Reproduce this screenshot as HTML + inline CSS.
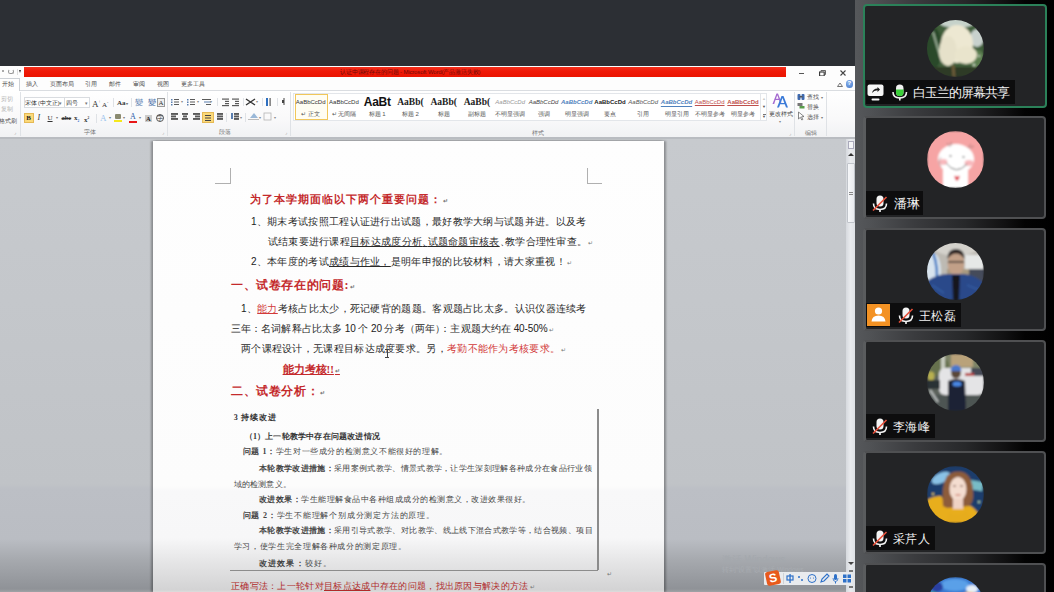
<!DOCTYPE html>
<html><head><meta charset="utf-8">
<style>
*{margin:0;padding:0;box-sizing:border-box}
html,body{width:1054px;height:592px;overflow:hidden;background:#2c2f34;font-family:"Liberation Sans",sans-serif}
.a{position:absolute}
#word{position:absolute;left:0;top:66px;width:855px;height:526px;background:#fdfdfd;overflow:hidden}
#red{position:absolute;left:24px;top:0.6px;width:762px;height:10.5px;background:linear-gradient(#f2301c,#f01a08 40%,#ea1400)}
#doc{position:absolute;left:0;top:73px;width:855px;height:453px;background:linear-gradient(#c7cace 0px,#c4c7cb 161px,#c0c3c7 345px,#bcbfc5 350px,#babdc3 400px,#a6a9ae 421px,#8f9297 450px,#a0a3a6 453px)}
#page{position:absolute;left:153px;top:2px;width:511px;height:451px;background:linear-gradient(#fefefe 0px,#fcfcfc 345px,#f8f8f9 350px,#f7f7f8 397px,#e6e6e7 420px,#d3d3d4 449px,#dcdcdc 451px);box-shadow:-2px 0 2px rgba(0,0,0,.3),2px 0 2px rgba(0,0,0,.3)}
#panel{position:absolute;left:855px;top:0;width:199px;height:592px;background:linear-gradient(90deg,#56585b 0px,#505255 15px,#3a3b3e 60px,#27282a 110px,#111112 150px,#030303 170px,#000 199px)}
.tile{position:absolute;left:8px;width:183px;height:102.5px;background:#232426;border:2px solid #4f5052;border-left:3px solid #5a5c5e;border-radius:4px}
.av{position:absolute;left:63px;width:57px;height:57px;border-radius:50%;overflow:hidden}
.nb{position:absolute;left:3px;height:24px;background:#0d0d0e;color:#f2f2f2;font-size:12.5px;line-height:24px;white-space:nowrap}

.t{position:absolute;white-space:nowrap;font-family:"Liberation Serif",serif;color:#2a2a2a}
.h{color:#c42a2c;font-weight:bold}
.r{color:#d23a3a}
.u{text-decoration:underline;text-underline-offset:1px}
.pm{font-size:6px;color:#777;margin-left:1px}

.rb{position:absolute;white-space:nowrap;font-family:"Liberation Sans",sans-serif;font-size:6px;line-height:8px;color:#4a4a4a}
.sep{position:absolute;width:1px;background:#dfe2e6}
.ic{position:absolute}
</style></head><body>
<div id="word">
  <div id="red"></div>
  <div id="doc">
    <div id="page"></div>
  </div>
</div>


<div id="rib">
<!-- title row -->
<div class="a" style="left:2px;top:70px;width:2px;height:2px;background:#aaa"></div>
<div class="a" style="left:8px;top:68.5px;width:5.5px;height:5.5px;border:1.3px solid #999;border-top-color:transparent;border-radius:50%"></div>
<div class="a" style="left:17px;top:69px;width:1px;height:6px;background:#ddd"></div>
<div class="a" style="left:19px;top:70px;width:0;height:0;border-left:1.8px solid transparent;border-right:1.8px solid transparent;border-top:3px solid #333"></div>
<div class="rb" style="left:340px;top:68px;font-size:6px;color:#6e0c08;letter-spacing:-0.15px">认证中课程存在的问题 - Microsoft Word(产品激活失败)</div>
<div class="a" style="left:798.5px;top:73px;width:5px;height:1px;background:#555"></div>
<svg class="ic" style="left:818.5px;top:69.5px" width="7" height="6.5" viewBox="0 0 7 6.5"><path d="M2 1.5V0.5H6.5V4.5H5.5" fill="none" stroke="#555" stroke-width="0.9"/><rect x="0.6" y="2" width="4.6" height="4" fill="none" stroke="#333" stroke-width="1.1"/></svg>
<svg class="ic" style="left:840px;top:70px" width="6" height="6"><path d="M0.5 0.5L5.5 5.5M5.5 0.5L0.5 5.5" stroke="#444" stroke-width="1.1"/></svg>
<!-- tabs -->
<div class="a" style="left:-1px;top:77.5px;width:20.5px;height:14px;border:1px solid #cdd1d6;border-bottom:none;background:#fff"></div>
<div class="a" style="left:19.5px;top:90px;width:836px;height:1px;background:#dadde1"></div>
<div class="rb" style="left:2px;top:80px">开始</div>
<div class="rb" style="left:26px;top:80px">插入</div>
<div class="rb" style="left:50px;top:80px">页面布局</div>
<div class="rb" style="left:85px;top:80px">引用</div>
<div class="rb" style="left:109px;top:80px">邮件</div>
<div class="rb" style="left:133px;top:80px">审阅</div>
<div class="rb" style="left:157px;top:80px">视图</div>
<div class="rb" style="left:181px;top:80px">更多工具</div>
<svg class="ic" style="left:837px;top:82px" width="6" height="5"><path d="M0.5 4.5L3 1L5.5 4.5Z" fill="none" stroke="#666" stroke-width="0.9"/></svg>
<div class="a" style="left:845.5px;top:80px;width:7.5px;height:7.5px;border-radius:50%;background:radial-gradient(circle at 40% 35%,#8fb6ee,#3e74c8);color:#fff;font-size:6px;line-height:7.5px;text-align:center;font-weight:bold">?</div>
<!-- ribbon body -->
<div class="a" style="left:0;top:91px;width:855px;height:46px;background:linear-gradient(#ffffff,#f9f9fa 60%,#f1f2f4)"></div>
<div class="a" style="left:0;top:136.5px;width:855px;height:2.5px;background:#b9bcc1"></div>
<div class="sep" style="left:20px;top:92px;height:44px"></div>
<div class="sep" style="left:167px;top:92px;height:44px"></div>
<div class="sep" style="left:290px;top:92px;height:44px"></div>
<div class="sep" style="left:794px;top:92px;height:44px"></div>
<div class="sep" style="left:826px;top:92px;height:44px"></div>
<div class="rb" style="left:84px;top:128px;color:#777">字体</div>
<div class="rb" style="left:219px;top:128px;color:#777">段落</div>
<div class="rb" style="left:532px;top:128.5px;color:#777">样式</div>
<div class="rb" style="left:805px;top:128.5px;color:#777">编辑</div>
<div class="rb" style="left:14px;top:128px;color:#999;font-size:5px">⌟</div>
<div class="rb" style="left:162px;top:128px;color:#999;font-size:5px">⌟</div>
<div class="rb" style="left:285px;top:128px;color:#999;font-size:5px">⌟</div>
<div class="rb" style="left:789px;top:128.5px;color:#999;font-size:5px">⌟</div>
<!-- clipboard -->
<div class="rb" style="left:1px;top:94.5px;color:#b0b0b0">剪切</div>
<div class="rb" style="left:1px;top:105px;color:#b0b0b0">复制</div>
<div class="rb" style="left:-1px;top:117px;color:#555">格式刷</div>
<!-- font group -->
<div class="a" style="left:23.5px;top:97px;width:41px;height:11px;border:1px solid #d9dce0;background:#fff"></div>
<div class="a" style="left:64.5px;top:97px;width:25px;height:11px;border:1px solid #d9dce0;border-left:none;background:#fff"></div>
<div class="rb" style="left:24.5px;top:98.5px;color:#333;font-size:5.5px">宋体 (中文正)</div>
<div class="rb" style="left:59px;top:98.5px;color:#777;font-size:5px">▾</div>
<div class="rb" style="left:66px;top:98.5px;color:#333">四号</div>
<div class="rb" style="left:85px;top:98.5px;color:#777;font-size:5px">▾</div>
<div class="rb" style="left:92px;top:96.5px;color:#333;font-size:9px;line-height:10px;font-family:'Liberation Serif'">A<sup style="font-size:4px">+</sup></div>
<div class="rb" style="left:102px;top:98px;color:#333;font-size:7px;line-height:10px;font-family:'Liberation Serif'">A<sup style="font-size:4px">-</sup></div>
<div class="sep" style="left:113px;top:98px;height:9px"></div>
<div class="rb" style="left:117px;top:97.5px;color:#333;font-size:7px;line-height:10px;font-family:'Liberation Serif';font-weight:bold">Aa<span style="font-size:4px;color:#777">▾</span></div>
<div class="sep" style="left:131px;top:98px;height:9px"></div>
<div class="rb" style="left:135px;top:97.5px;color:#5b7fb0;font-size:8px;line-height:10px">變</div>
<div class="rb" style="left:148px;top:97.5px;color:#3e6aa6;font-size:8px;line-height:10px">變</div>
<div class="a" style="left:157px;top:98px;width:8px;height:9px;border:1px solid #999;background:#eee;color:#333;font-size:7px;line-height:8px;text-align:center;font-family:'Liberation Serif'">A</div>
<div class="a" style="left:23.5px;top:113px;width:10px;height:10px;border:1px solid #e5b955;background:#fbd97a;color:#222;font-size:7px;line-height:8px;text-align:center;font-weight:bold;font-family:'Liberation Serif'">B</div>
<div class="rb" style="left:37.5px;top:113px;color:#333;font-size:8px;line-height:10px;font-style:italic;font-family:'Liberation Serif'">I</div>
<div class="rb" style="left:47.5px;top:113px;color:#333;font-size:7px;line-height:10px;text-decoration:underline;font-family:'Liberation Serif'">U</div>
<div class="rb" style="left:56px;top:114px;color:#777;font-size:4px">▾</div>
<div class="rb" style="left:61.5px;top:113px;color:#333;font-size:6.5px;line-height:10px;text-decoration:line-through;font-weight:bold;font-family:'Liberation Serif'">abc</div>
<div class="rb" style="left:74px;top:113px;color:#333;font-size:7px;line-height:10px;font-weight:bold;font-family:'Liberation Serif'">x<sub style="font-size:3.5px;color:#36c">2</sub></div>
<div class="rb" style="left:84px;top:113px;color:#333;font-size:7px;line-height:10px;font-weight:bold;font-family:'Liberation Serif'">x<sup style="font-size:3.5px">2</sup></div>
<div class="sep" style="left:96px;top:114px;height:9px"></div>
<div class="rb" style="left:100px;top:112.5px;color:#9cc4ec;font-size:9px;line-height:10px;font-family:'Liberation Serif'">A</div>
<div class="rb" style="left:109px;top:114px;color:#777;font-size:4px">▾</div>
<div class="a" style="left:115px;top:114px;width:6px;height:5px;background:#8a8a70;border-radius:1px"></div>
<div class="a" style="left:114px;top:120px;width:8px;height:2px;background:#f5e81c"></div>
<div class="rb" style="left:123px;top:114px;color:#777;font-size:4px">▾</div>
<div class="rb" style="left:130px;top:112px;color:#2d5aa8;font-size:8px;line-height:9px;font-family:'Liberation Serif'">A</div>
<div class="a" style="left:129px;top:121px;width:8px;height:2px;background:#e81818"></div>
<div class="rb" style="left:139px;top:114px;color:#777;font-size:4px">▾</div>
<div class="a" style="left:145px;top:114.5px;width:6.5px;height:7px;background:#ccc;color:#222;font-size:6.5px;line-height:7px;text-align:center;font-weight:bold;font-family:'Liberation Serif'">A</div>
<div class="a" style="left:155.5px;top:113.5px;width:8.5px;height:8.5px;border:1px solid #555;border-radius:50%;color:#333;font-size:5.5px;line-height:6.5px;text-align:center">字</div>
<!-- paragraph group -->
<svg class="ic" style="left:170px;top:98px" width="125" height="28">
<g fill="#5a5a5a">
<rect x="1" y="1" width="1.5" height="1.5" fill="#5b7fb0"/><rect x="4" y="1" width="5" height="1"/>
<rect x="1" y="3.5" width="1.5" height="1.5" fill="#5b7fb0"/><rect x="4" y="3.5" width="5" height="1"/>
<rect x="1" y="6" width="1.5" height="1.5" fill="#5b7fb0"/><rect x="4" y="6" width="5" height="1"/>
<rect x="17" y="1" width="1.5" height="1.5" fill="#5b7fb0"/><rect x="20" y="1" width="5" height="1"/>
<rect x="17" y="3.5" width="1.5" height="1.5" fill="#5b7fb0"/><rect x="20" y="3.5" width="5" height="1"/>
<rect x="17" y="6" width="1.5" height="1.5" fill="#5b7fb0"/><rect x="20" y="6" width="5" height="1"/>
<rect x="32" y="1" width="9" height="1"/><rect x="34" y="3.5" width="7" height="1" fill="#5b7fb0"/><rect x="36" y="6" width="5" height="1"/>
<rect x="52" y="0.5" width="7" height="1.2"/><rect x="55" y="2.8" width="4" height="1.2"/><rect x="55" y="5" width="4" height="1.2"/><rect x="52" y="7" width="7" height="1.2"/>
<rect x="62" y="0.5" width="7" height="1.2"/><rect x="65" y="2.8" width="4" height="1.2"/><rect x="65" y="5" width="4" height="1.2"/><rect x="62" y="7" width="7" height="1.2"/>
<path d="M76 1L85 7M85 1L76 7" stroke="#333" stroke-width="1.4"/>
<rect x="96" y="0" width="2" height="8" fill="#2d6fc0"/><rect x="99.5" y="0" width="1.2" height="8"/>
<rect x="112" y="2" width="2" height="3" fill="#444"/><rect x="113.5" y="0" width="1" height="7" fill="#444"/>
<rect x="1" y="15" width="7" height="1.9"/><rect x="1" y="17.5" width="5" height="1.9"/><rect x="1" y="20" width="7" height="1.9"/>
<rect x="12" y="15" width="6" height="1.9"/><rect x="13" y="17.5" width="4" height="1.9"/><rect x="12" y="20" width="6" height="1.9"/>
<rect x="23" y="15" width="7" height="1.9"/><rect x="25" y="17.5" width="5" height="1.9"/><rect x="23" y="20" width="7" height="1.9"/>
<rect x="47" y="15" width="6" height="1.9"/><rect x="47" y="17.5" width="6" height="1.9"/><rect x="47" y="20" width="6" height="1.9"/>
<rect x="61" y="15" width="2" height="6" fill="#5b7fb0"/><rect x="64" y="15" width="5" height="1.9"/><rect x="64" y="17.5" width="5" height="1.9"/><rect x="64" y="20" width="5" height="1.9"/>
<path d="M80 20L84 15L88 20Z" fill="#9ab8d8"/><rect x="78" y="21" width="11" height="1" fill="#bbb"/>
<rect x="94" y="15" width="7" height="7" fill="none" stroke="#b5b5b5" stroke-width="0.8"/>
</g>
</svg>
<div class="rb" style="left:181px;top:98px;color:#888;font-size:4px">▾</div>
<div class="rb" style="left:197px;top:98px;color:#888;font-size:4px">▾</div>
<div class="rb" style="left:210px;top:98px;color:#888;font-size:4px">▾</div>
<div class="rb" style="left:256px;top:98px;color:#888;font-size:4px">▾</div>
<div class="sep" style="left:217px;top:98px;height:8px"></div>
<div class="sep" style="left:243px;top:98px;height:8px"></div>
<div class="sep" style="left:262px;top:98px;height:8px"></div>
<div class="sep" style="left:277px;top:98px;height:8px"></div>
<div class="a" style="left:202px;top:112px;width:11.5px;height:11px;border:1px solid #e5b955;background:#fbd97a"></div>
<div class="a" style="left:204.5px;top:115px;width:6.5px;height:1.3px;background:#444;box-shadow:0 2.5px 0 #444,0 5px 0 #444"></div>
<div class="sep" style="left:226px;top:113px;height:9px"></div>
<div class="sep" style="left:245px;top:113px;height:9px"></div>
<div class="rb" style="left:240px;top:114px;color:#888;font-size:4px">▾</div>
<div class="rb" style="left:259px;top:114px;color:#888;font-size:4px">▾</div>
<div class="rb" style="left:274px;top:114px;color:#888;font-size:4px">▾</div>
<!-- styles gallery -->
<div class="a" style="left:293px;top:93px;width:474px;height:27.5px;border:1px solid #e3e6ea;background:#fff"></div>
<div class="a" style="left:760px;top:93px;width:1px;height:27.5px;background:#e3e6ea"></div>
<div class="a" style="left:294.5px;top:93.5px;width:33px;height:26.5px;border:1.5px solid #f1c75a;background:#fffdf3"></div>
<div class="rb" style="left:290.7px;top:96px;width:40px;height:12px;line-height:12px;text-align:center;font-size:6px;color:#333">AaBbCcDd</div>
<div class="rb" style="left:290.7px;top:110px;width:40px;text-align:center;color:#555">↵ 正文</div>
<div class="rb" style="left:323.9px;top:96px;width:40px;height:12px;line-height:12px;text-align:center;font-size:6px;color:#333">AaBbCcDd</div>
<div class="rb" style="left:323.9px;top:110px;width:40px;text-align:center;color:#555">↵ 无间隔</div>
<div class="rb" style="left:357.2px;top:96px;width:40px;height:12px;line-height:12px;text-align:center;font-size:12px;color:#111;font-weight:bold;letter-spacing:-0.3px">AaBt</div>
<div class="rb" style="left:357.2px;top:110px;width:40px;text-align:center;color:#555">标题 1</div>
<div class="rb" style="left:390.4px;top:96px;width:40px;height:12px;line-height:12px;text-align:center;font-size:9.5px;color:#222;font-weight:bold;font-family:'Liberation Serif'">AaBb(</div>
<div class="rb" style="left:390.4px;top:110px;width:40px;text-align:center;color:#555">标题 2</div>
<div class="rb" style="left:423.7px;top:96px;width:40px;height:12px;line-height:12px;text-align:center;font-size:9.5px;color:#222;font-weight:bold;font-family:'Liberation Serif'">AaBb(</div>
<div class="rb" style="left:423.7px;top:110px;width:40px;text-align:center;color:#555">标题</div>
<div class="rb" style="left:456.9px;top:96px;width:40px;height:12px;line-height:12px;text-align:center;font-size:9.5px;color:#222;font-weight:bold;font-family:'Liberation Serif'">AaBb(</div>
<div class="rb" style="left:456.9px;top:110px;width:40px;text-align:center;color:#555">副标题</div>
<div class="rb" style="left:490.2px;top:96px;width:40px;height:12px;line-height:12px;text-align:center;font-size:6px;color:#999;font-style:italic">AaBbCcDd</div>
<div class="rb" style="left:490.2px;top:110px;width:40px;text-align:center;color:#555">不明显强调</div>
<div class="rb" style="left:523.5px;top:96px;width:40px;height:12px;line-height:12px;text-align:center;font-size:6px;color:#444;font-style:italic">AaBbCcDd</div>
<div class="rb" style="left:523.5px;top:110px;width:40px;text-align:center;color:#555">强调</div>
<div class="rb" style="left:556.7px;top:96px;width:40px;height:12px;line-height:12px;text-align:center;font-size:6px;color:#4f81bd;font-style:italic;font-weight:bold">AaBbCcDd</div>
<div class="rb" style="left:556.7px;top:110px;width:40px;text-align:center;color:#555">明显强调</div>
<div class="rb" style="left:590.0px;top:96px;width:40px;height:12px;line-height:12px;text-align:center;font-size:6px;color:#222;font-weight:bold">AaBbCcDd</div>
<div class="rb" style="left:590.0px;top:110px;width:40px;text-align:center;color:#555">要点</div>
<div class="rb" style="left:623.2px;top:96px;width:40px;height:12px;line-height:12px;text-align:center;font-size:6px;color:#555;font-style:italic">AaBbCcDd</div>
<div class="rb" style="left:623.2px;top:110px;width:40px;text-align:center;color:#555">引用</div>
<div class="rb" style="left:656.5px;top:96px;width:40px;height:12px;line-height:12px;text-align:center;font-size:6px;color:#4f81bd;font-style:italic;font-weight:bold;text-decoration:underline;text-underline-offset:1.5px">AaBbCcDd</div>
<div class="rb" style="left:656.5px;top:110px;width:40px;text-align:center;color:#555">明显引用</div>
<div class="rb" style="left:689.7px;top:96px;width:40px;height:12px;line-height:12px;text-align:center;font-size:6px;color:#c0504d;text-decoration:underline">AaBbCcDd</div>
<div class="rb" style="left:689.7px;top:110px;width:40px;text-align:center;color:#555">不明显参考</div>
<div class="rb" style="left:723.0px;top:96px;width:40px;height:12px;line-height:12px;text-align:center;font-size:6px;color:#c0504d;font-weight:bold;text-decoration:underline">AaBbCcDd</div>
<div class="rb" style="left:723.0px;top:110px;width:40px;text-align:center;color:#555">明显参考</div>

<div class="rb" style="left:761px;top:95px;width:6px;text-align:center;color:#ccc;font-size:4px">▲</div>
<div class="rb" style="left:761px;top:103px;width:6px;text-align:center;color:#555;font-size:4px">▼</div>
<div class="rb" style="left:761px;top:112.5px;width:6px;text-align:center;color:#555;font-size:4px">▼</div>
<div class="a" style="left:762.5px;top:113.5px;width:3px;height:0.8px;background:#777"></div>
<svg class="ic" style="left:772px;top:93px" width="16" height="15" viewBox="0 0 16 15"><path d="M0.5 11L4.5 0.5H6L9.5 9.5H8L7 7H3.5L2.2 11Z M3.9 5.8H6.6L5.3 2.3Z" fill="#a46ad0"/><path d="M5 14.5L9.5 3H11.5L16 14.5H14L12.8 11.3H8.2L7 14.5Z M8.7 10H12.3L10.5 5Z" fill="#3a7ad8"/></svg>
<div class="rb" style="left:769px;top:110px;color:#444">更改样式</div>
<div class="rb" style="left:779px;top:118px;color:#888;font-size:4px">▾</div>
<!-- editing -->
<svg class="ic" style="left:797px;top:93px" width="9" height="28">
<g fill="#3e6ab0"><rect x="0.5" y="1" width="3" height="6" rx="1"/><rect x="4.5" y="1" width="3" height="6" rx="1"/><rect x="2.5" y="3" width="3" height="1.5" fill="#555"/></g>
<g><rect x="0.5" y="10" width="5" height="3" fill="#777"/><rect x="2.5" y="13" width="5" height="2.5" fill="#5a9e4a"/></g>
<path d="M1.5 19L1.5 26L3.3 24.3L4.8 27L5.8 26.5L4.5 23.8L7 23.5Z" fill="#fff" stroke="#555" stroke-width="0.7"/>
</svg>
<div class="rb" style="left:807px;top:92.5px;color:#555">查找 <span style="font-size:4px;color:#777">▾</span></div>
<div class="rb" style="left:807px;top:102.5px;color:#555">替换</div>
<div class="rb" style="left:807px;top:113px;color:#555">选择 <span style="font-size:4px;color:#777">▾</span></div>
</div>

<div id="txt">
<div class="a" style="left:215px;top:183px;width:16px;height:1px;background:#b0b0b0"></div>
<div class="a" style="left:230px;top:168px;width:1px;height:16px;background:#b0b0b0"></div>
<div class="a" style="left:587px;top:183px;width:15px;height:1px;background:#b0b0b0"></div>
<div class="a" style="left:587px;top:168px;width:1px;height:16px;background:#b0b0b0"></div>

<div class="t h" style="left:249.5px;top:191.5px;font-size:11px;letter-spacing:1px;line-height:15px">为了本学期面临以下两个重要问题：<span class="pm">↵</span></div>
<div class="t" style="left:251px;top:215px;font-size:10px;letter-spacing:0.3px;line-height:14px"><b style="font-family:'Liberation Sans';font-size:10px;font-weight:normal;color:#222">1</b>、期末考试按照工程认证进行出试题，最好教学大纲与试题并进。以及考</div>
<div class="t" style="left:267.7px;top:235px;font-size:10px;letter-spacing:0.3px;line-height:14px">试结束要进行课程<span class="u">目标达成度分析<span style="letter-spacing:-4.7px">、</span>试题命题审核表</span><span style="letter-spacing:-4.7px">、</span>教学合理性审查。<span class="pm">↵</span></div>
<div class="t" style="left:251px;top:255px;font-size:10px;letter-spacing:0.3px;line-height:14px"><b style="font-family:'Liberation Sans';font-size:10px;font-weight:normal;color:#222">2</b>、本年度的考试<span class="u">成绩与作业，</span>是明年申报的比较材料，请大家重视！<span class="pm">↵</span></div>
<div class="t h" style="left:231px;top:278px;font-size:12px;letter-spacing:0.6px;line-height:15px">一、试卷存在的问题:<span class="pm">↵</span></div>
<div class="t" style="left:241px;top:302px;font-size:10px;letter-spacing:0.3px;line-height:14px"><b style="font-family:'Liberation Sans';font-size:10px;font-weight:normal;color:#222">1</b>、<span class="r u">能力</span>考核占比太少，死记硬背的题题。客观题占比太多。认识仪器连续考</div>
<div class="t" style="left:231px;top:322px;font-size:10px;letter-spacing:0.1px;line-height:14px">三年：名词解释占比太多 <span style="font-family:'Liberation Sans';font-size:10px;letter-spacing:-0.1px;color:#222">10</span> 个 <span style="font-family:'Liberation Sans';font-size:10px;letter-spacing:-0.1px;color:#222">20</span> 分考（两年<span style="letter-spacing:-4.7px">）</span>：主观题大约在 <span style="font-family:'Liberation Sans';font-size:10px;letter-spacing:-0.1px;color:#222">40-50%</span><span class="pm">↵</span></div>
<div class="t" style="left:241px;top:342px;font-size:10px;letter-spacing:0.3px;line-height:14px">两个课程设计，无课程目标达成度要求。另，<span class="r">考勤不能作为考核要求。</span><span class="pm">↵</span></div>
<div class="t h u" style="left:282.6px;top:361.5px;font-size:11px;line-height:14px">能力考核!!<span class="pm">↵</span></div>
<div class="t h" style="left:231px;top:384px;font-size:12px;letter-spacing:0.6px;line-height:15px">二、试卷分析：<span class="pm">↵</span></div>

<div class="a" style="left:597px;top:409px;width:1.5px;height:161px;background:#8c8c8c"></div>
<div class="a" style="left:230px;top:569.5px;width:368px;height:1.5px;background:#8c8c8c"></div>
<div class="t" style="left:233.7px;top:412px;font-size:8px;letter-spacing:0.8px;line-height:12px;font-weight:bold;color:#333">3 持续改进</div>
<div class="t" style="left:244.7px;top:431px;font-size:8px;letter-spacing:0.2px;line-height:12px;font-weight:bold;color:#333">（1）上一轮教学中存在问题改进情况</div>
<div class="t" style="left:242.8px;top:446px;font-size:8px;letter-spacing:0.6px;line-height:12px;color:#444"><b>问题 1：</b>学生对一些成分的检测意义不能很好的理解。</div>
<div class="t" style="left:258.9px;top:463px;font-size:8px;line-height:12px;color:#444;letter-spacing:0.33px"><b>本轮教学改进措施：</b>采用案例式教学、情景式教学，让学生深刻理解各种成分在食品行业领</div>
<div class="t" style="left:233.7px;top:479px;font-size:8px;letter-spacing:0.2px;line-height:12px;color:#444">域的检测意义。</div>
<div class="t" style="left:258.9px;top:494px;font-size:8px;letter-spacing:0.5px;line-height:12px;color:#444"><b>改进效果：</b>学生能理解食品中各种组成成分的检测意义，改进效果很好。</div>
<div class="t" style="left:242.5px;top:509.5px;font-size:8px;letter-spacing:0.8px;line-height:12px;color:#444"><b>问题 2：</b>学生不能理解个别成分测定方法的原理。</div>
<div class="t" style="left:258.9px;top:525px;font-size:8px;line-height:12px;color:#444;letter-spacing:0.35px"><b>本轮教学改进措施：</b>采用引导式教学、对比教学、线上线下混合式教学等，结合视频、项目</div>
<div class="t" style="left:233.7px;top:541px;font-size:8px;letter-spacing:0.65px;line-height:12px;color:#444">学习，使学生完全理解各种成分的测定原理。</div>
<div class="t" style="left:258.9px;top:557.5px;font-size:8px;letter-spacing:1.2px;line-height:12px;color:#444"><b>改进效果：</b>较好。</div>
<div class="a" style="left:607px;top:570px;font-size:6px;color:#777">↵</div>
<div class="t r" style="left:231px;top:579px;font-size:9px;letter-spacing:0.3px;line-height:14px;color:#b02a2a;font-weight:500">正确写法：上一轮针对<span class="u">目标点达成</span>中存在的问题，找出原因与解决的方法<span class="pm">↵</span></div>
</div>

<!-- scrollbar -->
<div class="a" style="left:846px;top:139px;width:9px;height:453px;background:linear-gradient(90deg,#d6d9de,#e9ebee 50%,#dfe2e6)"></div>
<div class="a" style="left:847.5px;top:141px;width:6px;height:8px;border:1px solid #aab;background:#f4f5f7"></div>
<div class="a" style="left:848px;top:153px;width:0;height:0;border-left:3px solid transparent;border-right:3px solid transparent;border-bottom:3px solid #333"></div>
<div class="a" style="left:847px;top:163px;width:7.5px;height:60px;border:1px solid #c0c4ca;border-radius:1px;background:linear-gradient(90deg,#f6f7f9,#e8eaee)"></div>
<div class="a" style="left:848.5px;top:192px;width:4px;height:2.5px;border-top:0.8px solid #888;border-bottom:0.8px solid #888"></div>
<div class="a" style="left:848px;top:562px;width:0;height:0;border-left:3px solid transparent;border-right:3px solid transparent;border-top:3px solid #444"></div>
<div class="a" style="left:849px;top:570px;width:4px;height:2px;background:#777"></div>
<div class="a" style="left:849px;top:586px;width:4px;height:2px;background:#777"></div>
<!-- watermark -->
<div class="rb" style="left:722px;top:554px;font-size:10px;line-height:12px;color:#a4a8ad">激活 Windows</div>
<div class="rb" style="left:722px;top:566px;font-size:6.5px;line-height:8px;color:#a8acb1">转到“设置”以激活 Windows。</div>
<!-- IME bar -->
<div class="a" style="left:764px;top:572px;width:88px;height:13px;background:#e9ebee;border-radius:1px"></div>
<div class="a" style="left:766px;top:571px;width:14px;height:14px;background:#e85a1c;border-radius:2.5px;transform:rotate(-12deg);color:#fff;font-weight:bold;font-size:12px;line-height:14px;text-align:center;font-family:'Liberation Sans'">S</div>
<div class="a" style="left:783px;top:573px;width:1px;height:11px;background:#cfd2d6"></div>
<svg class="ic" style="left:786px;top:573px" width="66" height="11" viewBox="0 0 66 11">
<g fill="#2d70c8"><rect x="1" y="3" width="6" height="4" fill="none" stroke="#2d70c8" stroke-width="1.2"/><rect x="3.4" y="1" width="1.3" height="9"/>
<circle cx="13" cy="4" r="1"/><circle cx="16" cy="7" r="1"/>
<circle cx="26" cy="5.5" r="4" fill="none" stroke="#2d70c8" stroke-width="1"/><circle cx="24.5" cy="5" r="0.6"/><circle cx="27.5" cy="5" r="0.6"/>
<path d="M35 9L36 6L41 1L43 3L38 8Z" fill="none" stroke="#2d70c8" stroke-width="1.1"/>
<rect x="48" y="1" width="3" height="6" rx="1.5"/><path d="M47 5Q47 8.5 49.5 8.5Q52 8.5 52 5" fill="none" stroke="#2d70c8" stroke-width="0.8"/><rect x="49" y="8.5" width="1" height="2"/>
<rect x="57" y="1.5" width="3.5" height="3.5"/><rect x="61.5" y="1.5" width="3.5" height="3.5"/><rect x="57" y="6" width="3.5" height="3.5"/><rect x="61.5" y="6" width="3.5" height="3.5"/></g>
</svg>
<!-- text cursor -->
<div class="a" style="left:386.5px;top:349px;width:1px;height:9px;background:#444"></div>
<div class="a" style="left:385px;top:349px;width:4px;height:1px;background:#444"></div>
<div class="a" style="left:385px;top:357px;width:4px;height:1px;background:#444"></div>

<div id="panel">
  <div class="tile" style="top:4px;left:7.5px;width:184px;height:103.5px;border:2.5px solid #2b8159"></div>
  <div class="tile" style="top:116px"></div>
  <div class="tile" style="top:228px"></div>
  <div class="tile" style="top:339.5px"></div>
  <div class="tile" style="top:451px"></div>
  <div class="tile" style="top:562.5px;height:40px"></div>
<svg class="ic" style="left:71.5px;top:19.5px" width="57" height="57" viewBox="0 0 57 57"><defs><filter id="bl" x="-10%" y="-10%" width="120%" height="120%"><feGaussianBlur stdDeviation="0.9"/></filter><clipPath id="c1"><circle cx="28.5" cy="28.5" r="28.5"/></clipPath></defs><g clip-path="url(#c1)"><g filter="url(#bl)"><rect width="57" height="57" fill="#3f5e3a"/><ellipse cx="30" cy="3" rx="17" ry="5" fill="#c6d2ca"/><ellipse cx="50" cy="18" rx="7" ry="9" fill="#c8d1cd"/><ellipse cx="6" cy="28" rx="9" ry="21" fill="#2b492b"/><path d="M6 12Q10 26 15 42" fill="none" stroke="#9fb39b" stroke-width="1.8"/><ellipse cx="50" cy="39" rx="8" ry="9" fill="#5c7e50"/><circle cx="47" cy="45" r="1.2" fill="#d0dcc8"/><circle cx="52" cy="36" r="1" fill="#d0dcc8"/><rect x="0" y="47" width="57" height="10" fill="#2e3b26"/><ellipse cx="30" cy="24" rx="16" ry="19" fill="#ede8d2"/><ellipse cx="21" cy="31" rx="9" ry="15" fill="#e6e1ca"/><ellipse cx="39" cy="35" rx="11" ry="9" fill="#e9e4cc"/><path d="M26 45L27 57" stroke="#6a5a38" stroke-width="3"/></g></g></svg><svg class="ic" style="left:71.5px;top:131.0px" width="57" height="57" viewBox="0 0 57 57"><defs><clipPath id="c2"><circle cx="28.5" cy="28.5" r="28.5"/></clipPath></defs><g clip-path="url(#c2)"><g filter="url(#bl)"><rect width="57" height="57" fill="#f6a4a4"/><ellipse cx="29" cy="28" rx="18" ry="15" fill="#ffffff"/><rect x="16" y="36" width="25" height="21" fill="#ffffff"/><ellipse cx="16" cy="31" rx="4.5" ry="3" fill="#f8b8bc"/><ellipse cx="42" cy="32" rx="4.5" ry="3" fill="#f8b8bc"/><circle cx="23.5" cy="25" r="0.9" fill="#555"/><circle cx="36.5" cy="26" r="0.9" fill="#555"/><path d="M19 32Q29 45 40 33" fill="none" stroke="#555" stroke-width="0.9"/><path d="M30 46q-2.5-2.5-2.5 0q0 2 2.5 4q2.5-2 2.5-4q0-2.5-2.5 0z" fill="#e03a48"/><path d="M20 12l3 4M24 11l0 4M44 13l-3 4M47 15l-4 2" stroke="#8a6a6a" stroke-width="0.7"/><path d="M14 36Q10 30 14 26" fill="none" stroke="#8a6a6a" stroke-width="0.5"/></g></g></svg><svg class="ic" style="left:71.5px;top:242.5px" width="57" height="57" viewBox="0 0 57 57"><defs><clipPath id="c3"><circle cx="28.5" cy="28.5" r="28.5"/></clipPath></defs><g clip-path="url(#c3)"><g filter="url(#bl)"><rect width="57" height="57" fill="#bdbab3"/><ellipse cx="29" cy="4" rx="22" ry="9" fill="#d4d2cc"/><ellipse cx="6" cy="28" rx="8" ry="18" fill="#d8e4ee"/><path d="M6 10Q12 25 9 44" fill="none" stroke="#3e7ac4" stroke-width="2.5"/><rect x="38" y="12" width="19" height="14" fill="#e6e8e7"/><rect x="40" y="26" width="17" height="15" fill="#454c5a"/><rect x="20" y="26" width="22" height="10" fill="#a89a80"/><ellipse cx="29" cy="20" rx="8.5" ry="12" fill="#c2a088"/><path d="M20.5 16Q20.5 6 29 6Q37.5 6 37.5 16Q34 10.5 29 10.5Q24 10.5 20.5 16Z" fill="#2a2420"/><rect x="21" y="18" width="16" height="1.6" fill="#3a3430"/><path d="M0 38Q10 31 21 31L37 31Q48 32 57 40L57 57L0 57Z" fill="#29498a"/><path d="M25 32L33 32L32 57L26 57Z" fill="#16171e"/><path d="M5 42L17 50M40 42L52 47" stroke="#3a62a8" stroke-width="1.2"/></g></g></svg><svg class="ic" style="left:71.5px;top:354.0px" width="57" height="57" viewBox="0 0 57 57"><defs><clipPath id="c4"><circle cx="28.5" cy="28.5" r="28.5"/></clipPath></defs><g clip-path="url(#c4)"><g filter="url(#bl)"><rect width="57" height="57" fill="#5c625c"/><rect x="0" y="0" width="57" height="16" fill="#7e8468"/><rect x="24" y="0" width="22" height="13" fill="#b9a27a"/><ellipse cx="10" cy="12" rx="12" ry="10" fill="#66714e"/><rect x="14" y="2" width="4" height="14" fill="#c8ccc0"/><ellipse cx="4" cy="22" rx="3.5" ry="4.5" fill="#b8b050"/><rect x="12" y="14" width="45" height="27" rx="6" fill="#e4e4e6"/><rect x="44" y="14" width="13" height="8" fill="#444956"/><rect x="38" y="19" width="9" height="3" fill="#b84040"/><rect x="0" y="26" width="13" height="9" fill="#2c3034"/><rect x="0" y="41" width="57" height="16" fill="#4e5452"/><path d="M3 36L11 48" stroke="#c0c4c4" stroke-width="2"/><ellipse cx="29" cy="19" rx="5" ry="5.5" fill="#5a4638"/><path d="M23.5 17Q24 11 29 11Q34 11 34.5 17Z" fill="#4a78cc"/><path d="M21 27Q29 23 38 27L39 57L21 57Z" fill="#1d2036"/><ellipse cx="30" cy="30" rx="4.5" ry="2.5" fill="#4a88e6"/></g></g></svg><svg class="ic" style="left:71.5px;top:465.5px" width="57" height="57" viewBox="0 0 57 57"><defs><clipPath id="c5"><circle cx="28.5" cy="28.5" r="28.5"/></clipPath></defs><g clip-path="url(#c5)"><g filter="url(#bl)"><rect width="57" height="57" fill="#1c3d6c"/><ellipse cx="14" cy="12" rx="10" ry="5" fill="#8ac2e6" transform="rotate(-25 14 12)"/><rect x="43" y="15" width="13" height="9" fill="#78bcc6" transform="rotate(10 49 19)"/><circle cx="6" cy="28" r="1.2" fill="#d8c060"/><circle cx="52" cy="36" r="1.2" fill="#a8d0b0"/><path d="M0 34Q6 30 14 30L20 38L44 40Q50 44 52 50L50 57L0 57Z" fill="#e8ae1e"/><path d="M16 40Q14 20 20 10Q28 3 38 7Q46 12 46 26Q47 36 42 40L20 42Z" fill="#8d5c3a"/><ellipse cx="31" cy="23" rx="8.5" ry="12" fill="#f4ddd0"/><rect x="26" y="33" width="10" height="10" fill="#efd2c4"/><path d="M22 46Q31 52 40 44L46 57L18 57Z" fill="#e6ac1a"/><path d="M26 20h3M33 20h3" stroke="#6a4030" stroke-width="0.9"/><ellipse cx="31" cy="29" rx="3" ry="1" fill="#d89888"/></g></g></svg><svg class="ic" style="left:71.5px;top:577.0px" width="57" height="57" viewBox="0 0 57 57"><defs><clipPath id="c6"><circle cx="28.5" cy="28.5" r="28.5"/></clipPath></defs><g clip-path="url(#c6)"><g filter="url(#bl)"><rect width="57" height="57" fill="#3a7ad2"/><ellipse cx="28" cy="8" rx="14" ry="6" fill="#5aa0e8"/><ellipse cx="10" cy="10" rx="6" ry="5" fill="#2a40a0"/><ellipse cx="45" cy="12" rx="6" ry="4" fill="#e8f0f8"/><ellipse cx="42" cy="17" rx="5" ry="2" fill="#e8c020"/><ellipse cx="48" cy="20" rx="5" ry="3" fill="#e83ab8"/><ellipse cx="6" cy="18" rx="5" ry="3" fill="#4ab050"/></g></g></svg>
  <div class="nb" style="left:11px;top:80px;width:149px"></div>
  <svg class="ic" style="left:12px;top:83.5px" width="17" height="17" viewBox="0 0 17 17"><rect x="0.5" y="0.5" width="16" height="11.5" rx="2" fill="#f6f6f6"/><path d="M5 9Q6 4.5 10.5 4.5L10.5 3L13 5.5L10.5 8L10.5 6.3Q7 6.3 5 9Z" fill="#1a1a1a"/><rect x="4.5" y="14.5" width="8" height="2" rx="1" fill="#f6f6f6"/></svg>
  <svg class="ic" style="left:37px;top:83.5px" width="16" height="17" viewBox="0 0 16 17"><rect x="4" y="0.5" width="7.5" height="11.5" rx="3.75" fill="#f2f2f2"/><path d="M4 5.5h7.5v3a3.75 3.75 0 0 1-7.5 0z" fill="#3ccf3a"/><path d="M1 8Q1 14 7.75 14Q14.5 14 14.5 8" fill="none" stroke="#f2f2f2" stroke-width="1.6"/><rect x="7" y="13.5" width="1.6" height="3" fill="#f2f2f2"/></svg>
  <div class="nb" style="left:58px;top:81px;background:transparent;font-size:13px;letter-spacing:-0.95px">白玉兰的屏幕共享</div>

  <div class="nb" style="left:11px;top:191px;width:56.5px"></div>
  <svg class="ic" style="left:17px;top:195px" width="16" height="18" viewBox="0 0 16 18"><rect x="4.5" y="0.5" width="7" height="11" rx="3.5" fill="#f4f4f4"/><path d="M1.5 8.5Q1.5 14.5 8 14.5Q14.5 14.5 14.5 8.5" fill="none" stroke="#f4f4f4" stroke-width="1.6"/><rect x="7.2" y="14" width="1.6" height="3" fill="#f4f4f4"/><path d="M1 15.5L14.5 2" stroke="#e8503a" stroke-width="1.6"/></svg>
  <div class="nb" style="left:38.5px;top:192px;background:transparent;font-size:13px">潘琳</div>

  <div class="nb" style="left:11px;top:303px;width:94.5px"></div>
  <div class="a" style="left:12px;top:303.5px;width:23px;height:22.5px;background:#f39224"></div>
  <svg class="ic" style="left:15px;top:306px" width="17" height="17" viewBox="0 0 17 17"><circle cx="8.5" cy="5" r="3.6" fill="#fff"/><path d="M1.5 15.5Q2 9.5 8.5 9.5Q15 9.5 15.5 15.5Z" fill="#fff"/></svg>
  <svg class="ic" style="left:43px;top:307px" width="16" height="18" viewBox="0 0 16 18"><rect x="4.5" y="0.5" width="7" height="11" rx="3.5" fill="#f4f4f4"/><path d="M1.5 8.5Q1.5 14.5 8 14.5Q14.5 14.5 14.5 8.5" fill="none" stroke="#f4f4f4" stroke-width="1.6"/><rect x="7.2" y="14" width="1.6" height="3" fill="#f4f4f4"/><path d="M1 15.5L14.5 2" stroke="#e8503a" stroke-width="1.6"/></svg>
  <div class="nb" style="left:64px;top:304px;background:transparent;font-size:12px;letter-spacing:0.4px">王松磊</div>

  <div class="nb" style="left:11px;top:414px;width:69px"></div>
  <svg class="ic" style="left:17px;top:418px" width="16" height="18" viewBox="0 0 16 18"><rect x="4.5" y="0.5" width="7" height="11" rx="3.5" fill="#f4f4f4"/><path d="M1.5 8.5Q1.5 14.5 8 14.5Q14.5 14.5 14.5 8.5" fill="none" stroke="#f4f4f4" stroke-width="1.6"/><rect x="7.2" y="14" width="1.6" height="3" fill="#f4f4f4"/><path d="M1 15.5L14.5 2" stroke="#e8503a" stroke-width="1.6"/></svg>
  <div class="nb" style="left:38px;top:415px;background:transparent;font-size:12px;letter-spacing:0.4px">李海峰</div>

  <div class="nb" style="left:11px;top:526px;width:69px"></div>
  <svg class="ic" style="left:17px;top:530px" width="16" height="18" viewBox="0 0 16 18"><rect x="4.5" y="0.5" width="7" height="11" rx="3.5" fill="#f4f4f4"/><path d="M1.5 8.5Q1.5 14.5 8 14.5Q14.5 14.5 14.5 8.5" fill="none" stroke="#f4f4f4" stroke-width="1.6"/><rect x="7.2" y="14" width="1.6" height="3" fill="#f4f4f4"/><path d="M1 15.5L14.5 2" stroke="#e8503a" stroke-width="1.6"/></svg>
  <div class="nb" style="left:38px;top:527px;background:transparent;font-size:12px;letter-spacing:0.4px">采芹人</div>
</div>
</body></html>
